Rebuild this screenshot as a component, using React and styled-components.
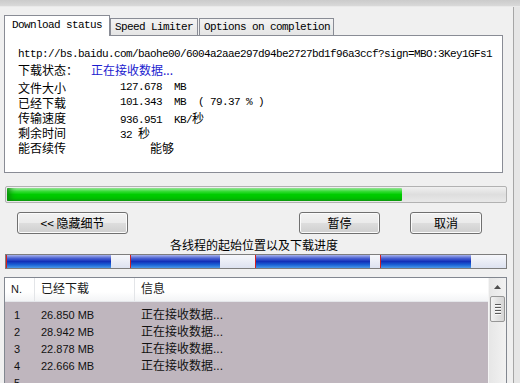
import styled, { createGlobalStyle } from "styled-components";

const GlobalStyle = createGlobalStyle`
  html, body {
    margin: 0;
    padding: 0;
    background: #f0f0f0;
  }
  body {
    font-family: "Noto Sans CJK SC", sans-serif;
    font-size: 12px;
    color: #000;
  }
`;

const mono = `"Liberation Mono", "Noto Sans CJK SC", monospace`;

const Window = styled.div`
  width: 520px;
  height: 383px;
  overflow: hidden;
  display: flex;
  flex-direction: column;
  background: #f0f0f0;
`;

const TopEdge = styled.div`
  height: 6px;
  flex-shrink: 0;
  background: linear-gradient(#cbcbcb, #d9d9d9);
  border-bottom: 1px solid #e9e9e9;
`;

const Body = styled.div`
  flex: 1;
  display: flex;
  min-height: 0;
`;

const Content = styled.div`
  width: 509px;
  padding-left: 4px;
  display: flex;
  flex-direction: column;
`;

const FrameEdge = styled.div`
  flex: 1;
  border-left: 1px solid #a6a6a6;
  background: #e6e6e6;
`;

const TabBar = styled.div`
  margin-top: 8px;
  height: 21px;
  display: flex;
  align-items: flex-end;
  position: relative;
  z-index: 1;
  margin-bottom: -1px;
`;

const Tab = styled.div`
  box-sizing: border-box;
  width: ${(p) => p.$w}px;
  height: ${(p) => (p.$active ? 21 : 18)}px;
  margin-left: ${(p) => p.$ml || 0}px;
  border: 1px solid #898c95;
  border-bottom: ${(p) => (p.$active ? "none" : "1px solid #898c95")};
  background: ${(p) =>
    p.$active ? "#fff" : "linear-gradient(#f3f3f3, #e5e5e5)"};
  font-family: ${mono};
  font-size: 11px;
  letter-spacing: -0.6px;
  line-height: ${(p) => (p.$active ? 18 : 16)}px;
  padding-left: ${(p) => p.$pl}px;
  white-space: pre;
`;

const Panel = styled.div`
  box-sizing: border-box;
  width: 499px;
  height: 138px;
  border: 1px solid #898c95;
  background: #fff;
  padding: 11px 0 0 13px;
`;

const Url = styled.div`
  font-family: ${mono};
  font-size: 11px;
  letter-spacing: -0.6px;
  line-height: 15px;
  white-space: pre;
`;

const StatusLine = styled.div`
  display: flex;
  line-height: 15px;
`;

const StatusValue = styled.span`
  margin-left: 13px;
  color: #1c1ccf;
`;

const InfoList = styled.div`
  margin-top: 3px;
`;

const InfoRow = styled.div`
  display: flex;
  height: 15px;
  line-height: 15px;
`;

const InfoLabel = styled.span`
  width: 102px;
`;

const InfoValue = styled.span`
  font-family: ${mono};
  font-size: 11px;
  letter-spacing: -0.6px;
  white-space: pre;
  padding-left: ${(p) => p.$indent || 0}px;
`;

const Cjk = styled.span`
  font-family: "Noto Sans CJK SC", sans-serif;
  font-size: 12px;
  letter-spacing: 0;
`;

const ProgressTrack = styled.div`
  box-sizing: border-box;
  margin: 13px 0 0 1px;
  width: 502px;
  height: 17px;
  border: 1px solid #b2b2b2;
  border-radius: 2px;
  background: linear-gradient(#f0f0f0, #dedede 50%, #e8e8e8);
  padding: 1px;
  display: flex;
`;

const ProgressFill = styled.div`
  height: 100%;
  background: linear-gradient(
    #b0f4b0 0%,
    #3ade3a 25%,
    #00cc00 50%,
    #00c200 80%,
    #109a10 100%
  );
  border-radius: 1px;
  box-shadow: inset 6px 0 6px -3px #0a8a0a;
`;

const ButtonRow = styled.div`
  margin-top: 9px;
  height: 22px;
  display: flex;
`;

const Button = styled.div`
  box-sizing: border-box;
  width: ${(p) => p.$w}px;
  margin-left: ${(p) => p.$ml}px;
  height: 22px;
  border: 1px solid #707070;
  border-radius: 3px;
  background: linear-gradient(#f2f2f2 0%, #ebebeb 48%, #dddddd 52%, #cfcfcf 100%);
  box-shadow: inset 0 0 0 1px #fbfbfb;
  display: flex;
  align-items: center;
  justify-content: center;
  font-size: 12px;
  line-height: 1;
`;

const Caption = styled.div`
  margin-top: 3px;
  height: 15px;
  line-height: 15px;
  text-align: center;
  padding-right: 9px;
`;

const ThreadBar = styled.div`
  box-sizing: border-box;
  margin: 2px 0 0 1px;
  width: 502px;
  height: 15px;
  border: 1px solid #7d7d7d;
  background: #e2e6f2;
  display: flex;
`;

const Segment = styled.div`
  height: 100%;
  display: flex;
  border-left: 1px solid #d42020;
  box-sizing: border-box;
  background: linear-gradient(#f6f7fb, #dde2f0);
`;

const SegmentFill = styled.div`
  height: 100%;
  background: linear-gradient(
    #a9b4ec 0%,
    #4c62d2 25%,
    #1230b8 50%,
    #1a62d6 75%,
    #4c9ae8 100%
  );
`;

const ListBox = styled.div`
  box-sizing: border-box;
  margin-top: 8px;
  width: 503px;
  flex: 1;
  border: 1px solid #828790;
  border-bottom: none;
  background: #fff;
  display: flex;
  min-height: 0;
`;

const Table = styled.div`
  flex: 1;
  display: flex;
  flex-direction: column;
  font-family: "Liberation Sans", "Noto Sans CJK SC", sans-serif;
  font-size: 11px;
`;

const HeaderRow = styled.div`
  height: 23px;
  display: flex;
  background: linear-gradient(#ffffff 60%, #f3f4f6);
  border-bottom: 1px solid #e4e6ea;
`;

const HeaderCell = styled.div`
  width: ${(p) => p.$w || "auto"};
  flex: ${(p) => (p.$w ? "none" : 1)};
  box-sizing: border-box;
  padding-left: 6px;
  line-height: 23px;
  font-size: ${(p) => (p.$cjk ? 12 : 11)}px;
  color: #1a1a1a;
  border-right: ${(p) => (p.$w ? "1px solid #e3e5e8" : "none")};
`;

const Rows = styled.div`
  flex: 1;
  background: #bfb6be;
  padding-top: 5px;
`;

const Row = styled.div`
  height: 17px;
  display: flex;
  line-height: 17px;
  color: #111;
`;

const Cell = styled.div`
  width: ${(p) => p.$w || "auto"};
  flex: ${(p) => (p.$w ? "none" : 1)};
  box-sizing: border-box;
  padding-left: ${(p) => p.$pl || 6}px;
  font-size: ${(p) => (p.$cjk ? 12 : 11)}px;
  white-space: pre;
`;

const ScrollBar = styled.div`
  width: 17px;
  background: linear-gradient(90deg, #e6e6e6, #f2f2f2);
  border-left: 1px solid #f5f5f5;
  display: flex;
  flex-direction: column;
  align-items: center;
`;

const ArrowUp = styled.div`
  height: 17px;
  display: flex;
  align-items: center;
  justify-content: center;
`;

const Thumb = styled.div`
  box-sizing: border-box;
  margin-top: 1px;
  width: 15px;
  height: 26px;
  border: 1px solid #979797;
  border-radius: 2px;
  background: linear-gradient(90deg, #f3f3f3, #e2e2e2 50%, #d6d6d6);
  display: flex;
  flex-direction: column;
  align-items: center;
  justify-content: center;
  gap: 1px;
`;

const Grip = styled.div`
  width: 6px;
  height: 1px;
  background: #5a5a5a;
  border-bottom: 1px solid #fafafa;
`;

const segments = [
  { done: 104, total: 124 },
  { done: 89, total: 125 },
  { done: 114, total: 125 },
  { done: 90, total: 126 },
];

const threads = [
  { n: "1", got: "26.850 MB", info: "正在接收数据..." },
  { n: "2", got: "28.942 MB", info: "正在接收数据..." },
  { n: "3", got: "22.878 MB", info: "正在接收数据..." },
  { n: "4", got: "22.666 MB", info: "正在接收数据..." },
  { n: "5", got: "", info: "" },
];

export default function App() {
  return (
    <Window>
      <GlobalStyle />
      <TopEdge />
      <Body>
        <Content>
          <TabBar>
            <Tab $active $w={106} $pl={7}>
              Download status
            </Tab>
            <Tab $w={88} $pl={4}>
              Speed Limiter
            </Tab>
            <Tab $w={135} $ml={1} $pl={4}>
              Options on completion
            </Tab>
          </TabBar>
          <Panel>
            <Url>
              http://bs.baidu.com/baohe00/6004a2aae297d94be2727bd1f96a3ccf?sign=MBO:3Key1GFs1
            </Url>
            <StatusLine>
              <span>下载状态：</span>
              <StatusValue>正在接收数据...</StatusValue>
            </StatusLine>
            <InfoList>
              <InfoRow>
                <InfoLabel>文件大小</InfoLabel>
                <InfoValue>127.678  MB</InfoValue>
              </InfoRow>
              <InfoRow>
                <InfoLabel>已经下载</InfoLabel>
                <InfoValue>101.343  MB  ( 79.37 % )</InfoValue>
              </InfoRow>
              <InfoRow>
                <InfoLabel>传输速度</InfoLabel>
                <InfoValue>
                  936.951  KB/<Cjk>秒</Cjk>
                </InfoValue>
              </InfoRow>
              <InfoRow>
                <InfoLabel>剩余时间</InfoLabel>
                <InfoValue>
                  32 <Cjk>秒</Cjk>
                </InfoValue>
              </InfoRow>
              <InfoRow>
                <InfoLabel>能否续传</InfoLabel>
                <InfoValue $indent={30}>
                  <Cjk>能够</Cjk>
                </InfoValue>
              </InfoRow>
            </InfoList>
          </Panel>
          <ProgressTrack>
            <ProgressFill style={{ width: "79.37%" }} />
          </ProgressTrack>
          <ButtonRow>
            <Button $w={111} $ml={13}>
              &lt;&lt; 隐藏细节
            </Button>
            <Button $w={81} $ml={171}>
              暂停
            </Button>
            <Button $w={72} $ml={30}>
              取消
            </Button>
          </ButtonRow>
          <Caption>各线程的起始位置以及下载进度</Caption>
          <ThreadBar>
            {segments.map((s, i) => (
              <Segment key={i} style={{ width: s.total }}>
                <SegmentFill style={{ width: s.done }} />
              </Segment>
            ))}
          </ThreadBar>
          <ListBox>
            <Table>
              <HeaderRow>
                <HeaderCell $w="30px">N.</HeaderCell>
                <HeaderCell $w="100px" $cjk>
                  已经下载
                </HeaderCell>
                <HeaderCell $cjk>信息</HeaderCell>
              </HeaderRow>
              <Rows>
                {threads.map((t) => (
                  <Row key={t.n}>
                    <Cell $w="30px" $pl={9}>
                      {t.n}
                    </Cell>
                    <Cell $w="100px">{t.got}</Cell>
                    <Cell $cjk>{t.info}</Cell>
                  </Row>
                ))}
              </Rows>
            </Table>
            <ScrollBar>
              <ArrowUp>
                <svg width="7" height="4" viewBox="0 0 7 4">
                  <path d="M3.5 0 L7 4 L0 4 Z" fill="#4d4d4d" />
                </svg>
              </ArrowUp>
              <Thumb>
                <Grip />
                <Grip />
                <Grip />
                <Grip />
              </Thumb>
            </ScrollBar>
          </ListBox>
        </Content>
        <FrameEdge />
      </Body>
    </Window>
  );
}
